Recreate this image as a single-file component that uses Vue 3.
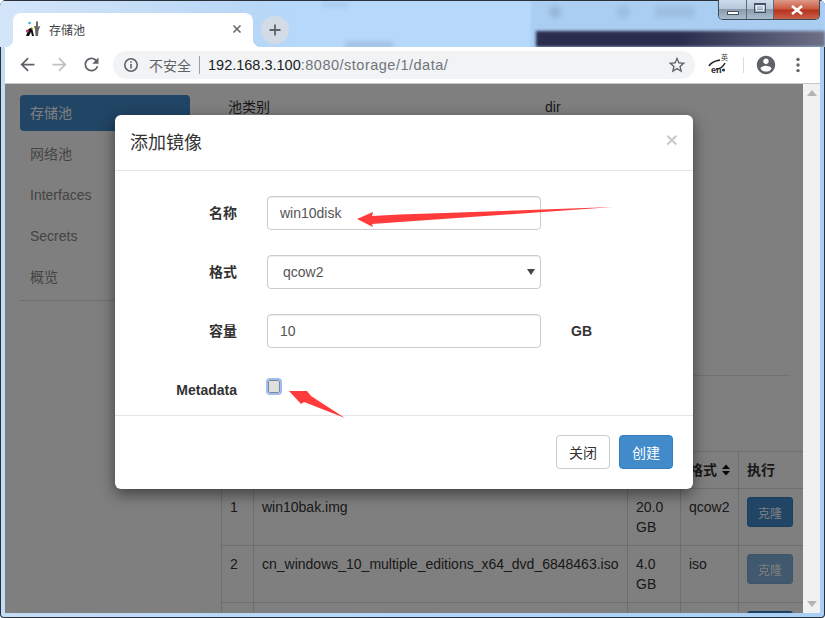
<script setup>
const navItems = ['存储池', '网络池', 'Interfaces', 'Secrets', '概览']
const rows = [
  { id: 1, index: '1', name: 'win10bak.img', size: '20.0 GB', format: 'qcow2', action: '克隆', disabled: false },
  { id: 2, index: '2', name: 'cn_windows_10_multiple_editions_x64_dvd_6848463.iso', size: '4.0 GB', format: 'iso', action: '克隆', disabled: true },
  { id: 3, index: '', name: '', size: '', format: '', action: '', disabled: false }
]
</script>

<template>
  <div class="window">
    <div class="titlebar">
      <div class="blur-backdrop">
        <span class="side-pane"></span>
        <span class="blob blob-a"></span>
        <span class="blob blob-b"></span>
        <span class="blob blob-c"></span>
        <span class="blob blob-d"></span>
        <span class="blob blob-e"></span>
        <span class="dark-pane"></span>
      </div>
      <div class="tab">
        <svg class="favicon" width="16" height="16" viewBox="0 0 16 16">
          <circle cx="4.5" cy="2" r="1.3" fill="#35b5e0" />
          <path d="M11 0.5 L13 0.5 L13 6 L15.5 4.5 L13.5 9.5 L13 15 L10.5 15 L10 8 L9 5 L11 5 Z" fill="#666" />
          <path d="M1 15 L3.5 8 L7 6.5 L9 15 L7 15 L6 11 L4 15 Z" fill="#111" />
          <circle cx="2.3" cy="10" r="1.5" fill="#d0358a" />
          <circle cx="7.5" cy="7.5" r="1.1" fill="#e8c020" />
        </svg>
        <span class="tab-title">存储池</span>
        <svg class="tab-close" width="10" height="10" viewBox="0 0 10 10">
          <path d="M1.5 1.5 L8.5 8.5 M8.5 1.5 L1.5 8.5" stroke="#5f6368" stroke-width="1.5" />
        </svg>
      </div>
      <div class="new-tab">
        <svg width="14" height="14" viewBox="0 0 14 14">
          <path d="M7 1.5 V12.5 M1.5 7 H12.5" stroke="#5f6368" stroke-width="1.8" />
        </svg>
      </div>
      <div class="controls">
        <div class="ctl ctl-min"><i></i></div>
        <div class="ctl ctl-max"><i></i></div>
        <div class="ctl ctl-close">
          <svg width="14" height="10" viewBox="0 0 14 10">
            <path d="M2 1 L12 9 M12 1 L2 9" stroke="#fff" stroke-width="2.6" />
          </svg>
        </div>
      </div>
    </div>

    <div class="toolbar">
      <div class="tool">
        <svg width="21" height="21" viewBox="0 0 24 24"><path fill="#5f6368" d="M20 11H7.83l5.59-5.59L12 4l-8 8 8 8 1.41-1.41L7.83 13H20v-2z" /></svg>
      </div>
      <div class="tool">
        <svg width="21" height="21" viewBox="0 0 24 24"><path fill="#bdc1c6" d="M4 11h12.17l-5.59-5.59L12 4l8 8-8 8-1.41-1.41L16.17 13H4v-2z" /></svg>
      </div>
      <div class="tool">
        <svg width="21" height="21" viewBox="0 0 24 24"><path fill="#5f6368" d="M17.65 6.35A7.958 7.958 0 0 0 12 4c-4.42 0-7.99 3.58-7.99 8s3.57 8 7.99 8c3.73 0 6.84-2.55 7.73-6h-2.08A5.99 5.99 0 0 1 12 18c-3.31 0-6-2.69-6-6s2.69-6 6-6c1.66 0 3.14.69 4.22 1.78L13 11h7V4l-2.35 2.35z" /></svg>
      </div>
      <div class="omnibox">
        <svg width="16" height="16" viewBox="0 0 16 16">
          <circle cx="8" cy="8" r="6.2" fill="none" stroke="#5f6368" stroke-width="1.6" />
          <path d="M8 7 V11.6 M8 4.2 V5.8" stroke="#5f6368" stroke-width="1.6" />
        </svg>
        <span class="insecure">不安全</span>
        <span class="omni-sep"></span>
        <span class="url"><b>192.168.3.100</b>:8080/storage/1/data/</span>
        <svg class="star" width="20" height="20" viewBox="0 0 24 24"><path fill="#5f6368" d="M22 9.24l-7.19-.62L12 2 9.19 8.63 2 9.24l5.46 4.73L5.82 21 12 17.27 18.18 21l-1.63-7.03L22 9.24zM12 15.4l-3.76 2.27 1-4.28-3.32-2.88 4.38-.38L12 6.1l1.71 4.04 4.38.38-3.32 2.88 1 4.28L12 15.4z" /></svg>
      </div>
      <div class="tool ext">
        <svg width="20" height="20" viewBox="0 0 20 20">
          <path d="M1 11 C4 6 9 6 12 5 M8 14 C12 14 15 12 17 8" fill="none" stroke="#222" stroke-width="1.5" />
          <circle cx="15.5" cy="15" r="1.6" fill="#333" />
        </svg>
        <span class="ext-en">en</span>
        <span class="ext-zh">英</span>
      </div>
      <span class="tool-sep"></span>
      <div class="tool">
        <svg width="22" height="22" viewBox="0 0 24 24"><path fill="#5f6368" d="M12 2C6.48 2 2 6.48 2 12s4.48 10 10 10 10-4.48 10-10S17.52 2 12 2zm0 3c1.66 0 3 1.34 3 3s-1.34 3-3 3-3-1.34-3-3 1.34-3 3-3zm0 14.2c-2.5 0-4.71-1.28-6-3.22.03-1.99 4-3.08 6-3.08 1.99 0 5.97 1.09 6 3.08-1.29 1.94-3.5 3.22-6 3.22z" /></svg>
      </div>
      <div class="tool">
        <svg width="4" height="16" viewBox="0 0 4 16">
          <circle cx="2" cy="2.4" r="1.7" fill="#5f6368" />
          <circle cx="2" cy="8" r="1.7" fill="#5f6368" />
          <circle cx="2" cy="13.6" r="1.7" fill="#5f6368" />
        </svg>
      </div>
    </div>

    <div class="viewport">
      <div class="page">
        <aside class="sidebar">
          <ul class="nav">
            <li v-for="(item, i) in navItems" :key="item" :class="{ active: i === 0 }">{{ item }}</li>
          </ul>
        </aside>
        <main class="content">
          <div class="info">
            <span class="info-key">池类别</span>
            <span>dir</span>
          </div>
          <table class="volumes">
            <colgroup>
              <col class="c-id" /><col class="c-name" /><col class="c-size" /><col class="c-format" /><col class="c-action" />
            </colgroup>
            <thead>
              <tr>
                <th></th>
                <th></th>
                <th></th>
                <th>格式<svg class="sort" width="8" height="12" viewBox="0 0 8 12"><path d="M4 0.5 L8 5 H0 Z M0 7 H8 L4 11.5 Z" fill="#111" /></svg></th>
                <th>执行</th>
              </tr>
            </thead>
            <tbody>
              <tr v-for="row in rows" :key="row.id">
                <td>{{ row.index }}</td>
                <td>{{ row.name }}</td>
                <td>{{ row.size }}</td>
                <td>{{ row.format }}</td>
                <td><button class="clone" :class="{ disabled: row.disabled }">{{ row.action }}</button></td>
              </tr>
            </tbody>
          </table>
        </main>

        <div class="overlay">
          <div class="modal">
            <header class="modal-head">
              <h4>添加镜像</h4>
              <span class="modal-x">×</span>
            </header>
            <div class="modal-body">
              <div class="field">
                <label>名称</label>
                <input class="control" value="win10disk" />
              </div>
              <div class="field">
                <label>格式</label>
                <div class="select-wrap">
                  <select class="control select">
                    <option>qcow2</option>
                  </select>
                  <svg class="caret" width="8" height="6" viewBox="0 0 8 6"><path d="M0 0 H8 L4 6 Z" fill="#444" /></svg>
                </div>
              </div>
              <div class="field">
                <label>容量</label>
                <input class="control" value="10" />
                <span class="unit">GB</span>
              </div>
              <div class="field field-check">
                <label>Metadata</label>
                <span class="check-cell"><input class="check" type="checkbox" /></span>
              </div>
            </div>
            <footer class="modal-foot">
              <button class="btn btn-default">关闭</button>
              <button class="btn btn-primary">创建</button>
            </footer>
          </div>
        </div>
      </div>
      <div class="scrollbar">
        <svg width="10" height="6" viewBox="0 0 10 6"><path d="M5 0 L10 6 H0 Z" fill="#b4b4b4" /></svg>
        <svg width="10" height="6" viewBox="0 0 10 6"><path d="M0 0 H10 L5 6 Z" fill="#b4b4b4" /></svg>
      </div>
    </div>

    <svg class="annotations" width="825" height="618" viewBox="0 0 825 618">
      <polygon points="357,219 373,212 372,216 400,214.5 613,207 400,222 372,224 373,227" fill="#ff3b3b" />
      <polygon points="289,391 307,391 311,396 345,418 304,402 301,404" fill="#ff3b3b" />
    </svg>
  </div>
</template>

<style scoped>
.window {
  position: relative;
  width: 825px;
  height: 618px;
  overflow: hidden;
  display: flex;
  flex-direction: column;
  background: linear-gradient(90deg, #c5dcf6 0, #b5d8fb 40%, #a8cff5 100%);
  font-family: "Liberation Sans", "Noto Sans CJK SC", sans-serif;
  font-size: 14px;
  color: #333;
  box-sizing: border-box;
  border-radius: 6px 6px 4px 4px;
  box-shadow: inset 0 0 0 1px #2b3039;
}

/* title bar */
.titlebar {
  position: relative;
  height: 47px;
  flex: none;
  display: flex;
  align-items: flex-end;
  padding-left: 13px;
  background: linear-gradient(90deg, #d3e5f9 0, #b9d7f6 30%, #b5d8fb 36%);
  border-top: 1px solid #2b3039;
  box-sizing: border-box;
}
.blur-backdrop {
  position: absolute;
  inset: 0;
  overflow: hidden;
}
.side-pane {
  position: absolute;
  left: 531px;
  top: 0;
  right: 0;
  bottom: 0;
  background: #a9cef2;
  filter: blur(1px);
}
.blob {
  position: absolute;
  background: #7f98b4;
  filter: blur(2.5px);
  opacity: 0.28;
}
.blob-a { left: 322px; top: 2px; width: 26px; height: 4px; }
.blob-b { left: 345px; top: 41px; width: 48px; height: 6px; opacity: 0.4; }
.blob-c { left: 549px; top: 5px; width: 12px; height: 12px; border-radius: 50%; opacity: 0.45; }
.blob-d { left: 616px; top: 4px; width: 14px; height: 14px; border-radius: 50%; }
.blob-e { left: 655px; top: 5px; width: 40px; height: 12px; }
.dark-pane {
  position: absolute;
  left: 536px;
  top: 30px;
  right: 0;
  bottom: 0;
  background: linear-gradient(90deg, #2a2d4d 0, #2a2d4d 50%, #6e7086 100%);
  filter: blur(1.5px);
}
.tab {
  position: relative;
  width: 240px;
  height: 34px;
  background: #fff;
  border-radius: 8px 8px 0 0;
  display: flex;
  align-items: center;
  padding: 0 11px 2px 12px;
  box-sizing: border-box;
}
.tab::before,
.tab::after {
  content: "";
  position: absolute;
  bottom: 0;
  width: 8px;
  height: 8px;
}
.tab::before {
  left: -8px;
  background: radial-gradient(circle at 0 0, transparent 8px, #fff 8.5px);
}
.tab::after {
  right: -8px;
  background: radial-gradient(circle at 100% 0, transparent 8px, #fff 8.5px);
}
.favicon { flex: none; }
.tab-title {
  margin-left: 8px;
  font-size: 12px;
  color: #3c4043;
  flex: 1;
}
.new-tab {
  position: relative;
  width: 28px;
  height: 28px;
  margin: 0 0 3px 8px;
  border-radius: 50%;
  background: #d3dbe6;
  display: flex;
  align-items: center;
  justify-content: center;
}
.controls {
  position: absolute;
  top: -1px;
  right: 5px;
  height: 20px;
  display: flex;
  border: 1px solid #3f4a58;
  border-top: none;
  border-radius: 0 0 5px 5px;
  overflow: hidden;
  box-sizing: border-box;
}
.ctl {
  height: 100%;
  display: flex;
  align-items: center;
  justify-content: center;
  background: linear-gradient(180deg, #cddcec 0, #b7c8da 45%, #8b9bac 50%, #a9bccf 100%);
  box-sizing: border-box;
}
.ctl-min { width: 28px; border-right: 1px solid #5c6a7a; }
.ctl-max { width: 27px; border-right: 1px solid #5c6a7a; }
.ctl-close { width: 45px; background: linear-gradient(180deg, #dd9a88 0, #cc5a42 45%, #b7331d 55%, #c9614a 100%); }
.ctl-min i {
  width: 12px;
  height: 4px;
  margin-top: 6px;
  background: #fff;
  border: 1px solid #47515e;
  box-sizing: border-box;
}
.ctl-max i {
  width: 12px;
  height: 10px;
  border: 1px solid #47515e;
  border-top-width: 2px;
  outline: 1px solid #e6edf5;
  outline-offset: -3px;
  box-sizing: border-box;
  margin-bottom: 3px;
}

/* toolbar */
.toolbar {
  position: relative;
  flex: none;
  height: 37px;
  margin: 0 5px;
  background: #fff;
  border-bottom: 1px solid #c9c9c9;
  display: flex;
  align-items: center;
  padding: 0 0 1px 6px;
  box-sizing: border-box;
}
.tool {
  position: relative;
  flex: none;
  width: 32px;
  height: 28px;
  display: flex;
  align-items: center;
  justify-content: center;
}
.omnibox {
  flex: none;
  width: 582px;
  height: 28px;
  margin-left: 6px;
  border-radius: 14px;
  background: #f1f3f4;
  display: flex;
  align-items: center;
  padding: 0 8px 0 10px;
  box-sizing: border-box;
}
.insecure {
  margin-left: 10px;
  font-size: 14px;
  color: #5f6368;
}
.omni-sep {
  width: 1px;
  height: 18px;
  margin: 0 8px;
  background: #9aa0a6;
}
.url {
  font-size: 14.5px;
  color: #70757a;
  flex: 1;
  white-space: nowrap;
  letter-spacing: 0.5px;
}
.url b {
  font-weight: normal;
  color: #202124;
  letter-spacing: 0;
}
.star { flex: none; }
.ext { margin-left: 7px; }
.ext-en {
  position: absolute;
  left: 9px;
  top: 15px;
  font-size: 9px;
  line-height: 9px;
  font-weight: bold;
  color: #222;
}
.ext-zh {
  position: absolute;
  left: 19px;
  top: 3px;
  font-size: 7px;
  line-height: 8px;
  color: #444;
}
.tool-sep {
  flex: none;
  width: 1px;
  height: 16px;
  margin: 0 6px 0 9px;
  background: #dadce0;
}

/* page */
.viewport {
  flex: 1;
  min-height: 0;
  margin: 0 5px 5px;
  display: flex;
  background: #fff;
}
.page {
  position: relative;
  flex: 1;
  min-width: 0;
  display: flex;
  overflow: hidden;
  background: #fff;
}
.sidebar {
  flex: none;
  width: 170px;
  margin-left: 15px;
  padding-top: 11px;
}
.nav {
  list-style: none;
  margin: 0;
  padding: 0 0 5px;
  border-bottom: 1px solid #ddd;
}
.nav li {
  height: 36px;
  line-height: 36px;
  margin-bottom: 5px;
  padding-left: 10px;
  border-radius: 4px;
  color: #888;
}
.nav li:last-child { margin-bottom: 0; }
.nav li.active {
  background: #428bca;
  color: #fff;
}
.content {
  flex: none;
  width: 582px;
  margin-left: 31px;
  padding-top: 13px;
}
.info {
  width: 569px;
  height: 279px;
  border-bottom: 1px solid #e4e4e4;
  display: flex;
  box-sizing: border-box;
  line-height: 20px;
}
.info-key {
  width: 324px;
  padding-left: 7px;
  box-sizing: border-box;
}
.volumes {
  margin-top: 75px;
  width: 582px;
  table-layout: fixed;
  border-collapse: collapse;
  line-height: 20px;
}
.c-id { width: 32px; }
.c-name { width: 374px; }
.c-size { width: 53px; }
.c-format { width: 58px; }
.c-action { width: 65px; }
.volumes th,
.volumes td {
  border: 1px solid #ddd;
  padding: 8px;
  text-align: left;
  vertical-align: top;
  box-sizing: border-box;
}
.volumes th { font-weight: bold; white-space: nowrap; height: 37px; }
.sort { margin-left: 5px; vertical-align: -1px; }
.clone {
  display: block;
  width: 46px;
  height: 30px;
  padding: 0;
  border: 1px solid #357ebd;
  border-radius: 3px;
  background: #428bca;
  color: #fff;
  font: 12px "Liberation Sans", "Noto Sans CJK SC", sans-serif;
}
.clone.disabled { opacity: 0.65; }

/* modal */
.overlay {
  position: absolute;
  inset: 0;
  background: rgba(0, 0, 0, 0.5);
}
.modal {
  width: 578px;
  height: 374px;
  margin: 31px 0 0 110px;
  background: #fff;
  border-radius: 6px;
  box-shadow: 0 5px 15px rgba(0, 0, 0, 0.5);
  display: flex;
  flex-direction: column;
}
.modal-head {
  flex: none;
  height: 56px;
  border-bottom: 1px solid #e5e5e5;
  display: flex;
  align-items: center;
  justify-content: space-between;
  padding: 0 15px 4px;
  box-sizing: border-box;
}
.modal-head h4 {
  margin: 0;
  font-size: 18px;
  font-weight: 400;
  color: #333;
}
.modal-x {
  font-size: 21px;
  font-weight: bold;
  line-height: 1;
  color: #000;
  opacity: 0.2;
  margin: 0 0 3px;
}
.modal-body {
  flex: 1;
  min-height: 0;
  padding-top: 25px;
}
.field {
  display: flex;
  align-items: flex-start;
  margin-bottom: 25px;
}
.field-check { margin-bottom: 0; }
.field label {
  flex: none;
  width: 122px;
  margin-right: 30px;
  padding-top: 7px;
  line-height: 20px;
  text-align: right;
  font-weight: bold;
  color: #333;
}
.control {
  display: block;
  width: 274px;
  height: 34px;
  padding: 6px 12px;
  border: 1px solid #ccc;
  border-radius: 4px;
  background: #fff;
  box-sizing: border-box;
  font: 14px "Liberation Sans", "Noto Sans CJK SC", sans-serif;
  color: #555;
  box-shadow: inset 0 1px 1px rgba(0, 0, 0, 0.075);
  outline: none;
}
.select-wrap { position: relative; }
.select {
  appearance: none;
  padding-left: 15px;
}
.caret {
  position: absolute;
  right: 6px;
  top: 14px;
}
.unit {
  margin-left: 30px;
  padding-top: 7px;
  line-height: 20px;
  font-weight: bold;
}
.check-cell {
  display: block;
  padding-top: 7px;
}
.check {
  appearance: none;
  display: block;
  width: 12px;
  height: 13px;
  margin: 0 0 0 1px;
  border: 1px solid #7f8794;
  border-radius: 2px;
  background: #dfdfdf;
  outline: 2px solid #9dbcf0;
  outline-offset: 0;
  box-sizing: border-box;
}
.modal-foot {
  flex: none;
  height: 74px;
  border-top: 1px solid #e5e5e5;
  display: flex;
  justify-content: flex-end;
  gap: 9px;
  padding: 19px 20px 0 0;
  box-sizing: border-box;
}
.btn {
  width: 54px;
  height: 34px;
  border-radius: 4px;
  border: 1px solid #ccc;
  font: 14px "Liberation Sans", "Noto Sans CJK SC", sans-serif;
  padding: 0;
}
.btn-default { background: #fff; color: #333; }
.btn-primary { background: #428bca; border-color: #357ebd; color: #fff; }

/* scrollbar */
.scrollbar {
  flex: none;
  width: 17px;
  background: #f1f1f1;
  display: flex;
  flex-direction: column;
  align-items: center;
  justify-content: space-between;
  padding: 6px 0 6px;
  box-sizing: border-box;
}

.annotations {
  position: absolute;
  left: 0;
  top: 0;
  pointer-events: none;
}
</style>

<style>
html, body { margin: 0; padding: 0; }
</style>
